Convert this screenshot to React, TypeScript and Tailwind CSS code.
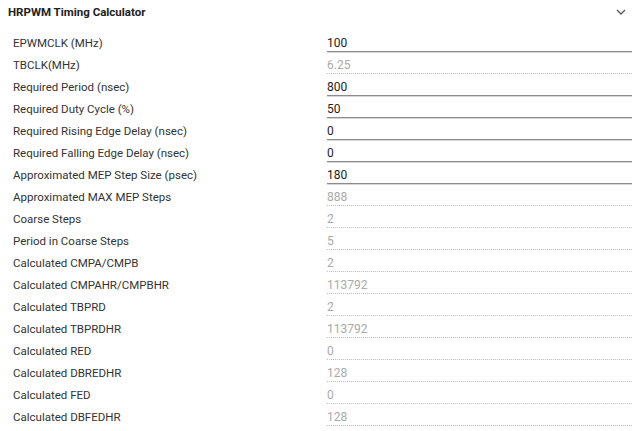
import React from "react";

const rows: { label: string; value: string; editable: boolean }[] = [
  { label: "EPWMCLK (MHz)", value: "100", editable: true },
  { label: "TBCLK(MHz)", value: "6.25", editable: false },
  { label: "Required Period (nsec)", value: "800", editable: true },
  { label: "Required Duty Cycle (%)", value: "50", editable: true },
  { label: "Required Rising Edge Delay (nsec)", value: "0", editable: true },
  { label: "Required Falling Edge Delay (nsec)", value: "0", editable: true },
  { label: "Approximated MEP Step Size (psec)", value: "180", editable: true },
  { label: "Approximated MAX MEP Steps", value: "888", editable: false },
  { label: "Coarse Steps", value: "2", editable: false },
  { label: "Period in Coarse Steps", value: "5", editable: false },
  { label: "Calculated CMPA/CMPB", value: "2", editable: false },
  { label: "Calculated CMPAHR/CMPBHR", value: "113792", editable: false },
  { label: "Calculated TBPRD", value: "2", editable: false },
  { label: "Calculated TBPRDHR", value: "113792", editable: false },
  { label: "Calculated RED", value: "0", editable: false },
  { label: "Calculated DBREDHR", value: "128", editable: false },
  { label: "Calculated FED", value: "0", editable: false },
  { label: "Calculated DBFEDHR", value: "128", editable: false },
];

export default function App() {
  return (
    <div
      className="w-[640px] h-[431px] bg-white overflow-hidden"
      style={{ fontFamily: "Roboto, 'Liberation Sans', sans-serif" }}
    >
      <div className="flex items-center justify-between h-[26px] pl-[8px] pr-[14px]">
        <span className="text-[11.5px] font-bold text-[#222]">HRPWM Timing Calculator</span>
        <svg width="10" height="6" viewBox="0 0 10 6" className="mt-[-2px]">
          <path d="M1 1 L5 5 L9 1" fill="none" stroke="#555" strokeWidth="1.3" />
        </svg>
      </div>
      <div className="mt-[6px] flex flex-col">
        {rows.map((r) => (
          <div key={r.label} className="flex items-center h-[22px] pl-[13px] pr-[8px]">
            <div className="w-[314px] text-[11.5px] text-[#333] leading-[16px]">{r.label}</div>
            <div
              className={
                r.editable
                  ? "flex-1 text-[12px] leading-[16px] text-[#222] border-b border-[#8c8c8c] shadow-[0_1px_0_#d6d6d6] mt-[1px]"
                  : "flex-1 text-[12px] leading-[16px] text-[#aaa] border-b border-dotted border-[#bdbdbd] mt-[1px]"
              }
            >
              {r.value}
            </div>
          </div>
        ))}
      </div>
    </div>
  );
}
